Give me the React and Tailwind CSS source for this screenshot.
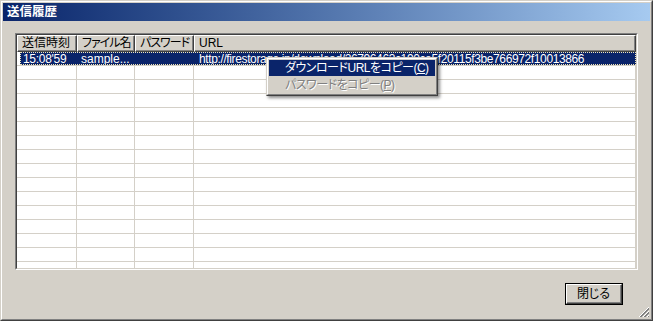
import React from "react";

const font = "font-['Liberation_Sans','Noto_Sans_CJK_JP',sans-serif] [font-feature-settings:'palt']";

function HeaderCell({ w, children, grow, tight }) {
  return (
    <div
      className={`${grow ? "flex-1" : "shrink-0"} h-full border-t border-l border-r border-b border-t-white border-l-white border-r-[#404040] border-b-[#404040]`}
      style={grow ? undefined : { width: w }}
    >
      <div className={`h-full border-r border-b border-r-[#808080] border-b-[#808080] pl-[4px] flex items-center leading-none whitespace-nowrap overflow-hidden ${tight ? "tracking-[-1px]" : ""}`}>
        {children}
      </div>
    </div>
  );
}

function EmptyRow() {
  return (
    <div className="flex h-[14px] shrink-0 border-b border-[#d4d0c8]">
      <div className="w-[60px] border-r border-[#d4d0c8]" />
      <div className="w-[58px] border-r border-[#d4d0c8]" />
      <div className="w-[59px] border-r border-[#d4d0c8]" />
      <div className="flex-1 border-r border-[#d4d0c8]" />
    </div>
  );
}

export default function App() {
  const rows = Array.from({ length: 15 });
  return (
    <div className={`${font} text-[12px] text-black`}>
      <div className="relative w-[653px] h-[321px] bg-[#d4d0c8] border border-t-[#d4d0c8] border-l-[#d4d0c8] border-r-[#404040] border-b-[#404040]">
        <div className="h-full flex flex-col border border-t-white border-l-white border-r-[#808080] border-b-[#808080] p-[1px]">
          {/* Title bar */}
          <div className="h-[18px] shrink-0 bg-gradient-to-r from-[#0a246a] to-[#a6caf0] flex items-center pl-[4px]">
            <span className="text-white font-bold text-[12.5px] leading-none">送信履歴</span>
          </div>

          {/* List view */}
          <div className="mt-[12px] mx-[12px] h-[237px] shrink-0 border border-t-[#808080] border-l-[#808080] border-r-white border-b-white">
            <div className="h-full border border-t-[#404040] border-l-[#404040] border-r-[#d4d0c8] border-b-[#d4d0c8] bg-white flex flex-col overflow-hidden">
              {/* Header */}
              <div className="flex h-[17px] shrink-0 bg-[#d4d0c8]">
                <HeaderCell w={60}>送信時刻</HeaderCell>
                <HeaderCell w={58} tight>ファイル名</HeaderCell>
                <HeaderCell w={59} tight>パスワード</HeaderCell>
                <HeaderCell grow>URL</HeaderCell>
              </div>
              {/* Selected row */}
              <div className="flex h-[14px] shrink-0 border-b border-[#d4d0c8]">
                <div className="w-[3px] shrink-0" />
                <div className="flex-1 flex bg-[#0a246a] text-white border border-dotted border-[#f0e6b8] leading-[12px] whitespace-nowrap overflow-hidden">
                  <div className="w-[56px] shrink-0 pl-[2px] tracking-[-0.3px]">15:08'59</div>
                  <div className="w-[58px] shrink-0 pl-[4px] overflow-hidden">sample...</div>
                  <div className="w-[59px] shrink-0" />
                  <div className="flex-1 pl-[5px] overflow-hidden tracking-[-0.38px]">http://firestorage.jp/download/26796463c190ce5f20115f3be766972f10013866</div>
                </div>
              </div>
              {rows.map((_, i) => (
                <EmptyRow key={i} />
              ))}
            </div>
          </div>

          {/* Button row */}
          <div className="flex justify-end mt-[13px] mr-[27px]">
            <div className="w-[58px] h-[22px] border border-black">
              <div className="h-full border border-t-white border-l-white border-r-[#404040] border-b-[#404040]">
                <div className="h-full border-r border-b border-r-[#808080] border-b-[#808080] flex items-center justify-center leading-none">
                  閉じる
                </div>
              </div>
            </div>
          </div>
        </div>

        {/* Context menu */}
        <div className="absolute left-[265px] top-[56px] w-[172px] bg-[#d4d0c8] border border-t-[#d4d0c8] border-l-[#d4d0c8] border-r-[#404040] border-b-[#404040] shadow-[2px_2px_3px_rgba(0,0,0,0.45)]">
          <div className="border border-t-white border-l-white border-r-[#808080] border-b-[#808080] py-[1px] px-[1px] tracking-[-0.5px]">
            <div className="h-[16px] bg-[#0a246a] text-white flex items-center pl-[16px] leading-none whitespace-nowrap">
              ダウンロードURLをコピー(<span className="underline">C</span>)
            </div>
            <div className="h-[17px] text-[#808080] flex items-center pl-[16px] leading-none whitespace-nowrap [text-shadow:1px_1px_0_#ffffff]">
              パスワードをコピー(<span className="underline">P</span>)
            </div>
          </div>
        </div>

        {/* Resize grip */}
        <svg className="absolute right-[2px] bottom-[2px]" width="12" height="12" viewBox="0 0 12 12">
          <line x1="11" y1="1" x2="1" y2="11" stroke="#ffffff" />
          <line x1="11" y1="2" x2="2" y2="11" stroke="#808080" />
          <line x1="11" y1="3" x2="3" y2="11" stroke="#808080" />
          <line x1="11" y1="5" x2="5" y2="11" stroke="#ffffff" />
          <line x1="11" y1="6" x2="6" y2="11" stroke="#808080" />
          <line x1="11" y1="7" x2="7" y2="11" stroke="#808080" />
          <line x1="11" y1="9" x2="9" y2="11" stroke="#ffffff" />
          <line x1="11" y1="10" x2="10" y2="11" stroke="#808080" />
        </svg>
      </div>
    </div>
  );
}
